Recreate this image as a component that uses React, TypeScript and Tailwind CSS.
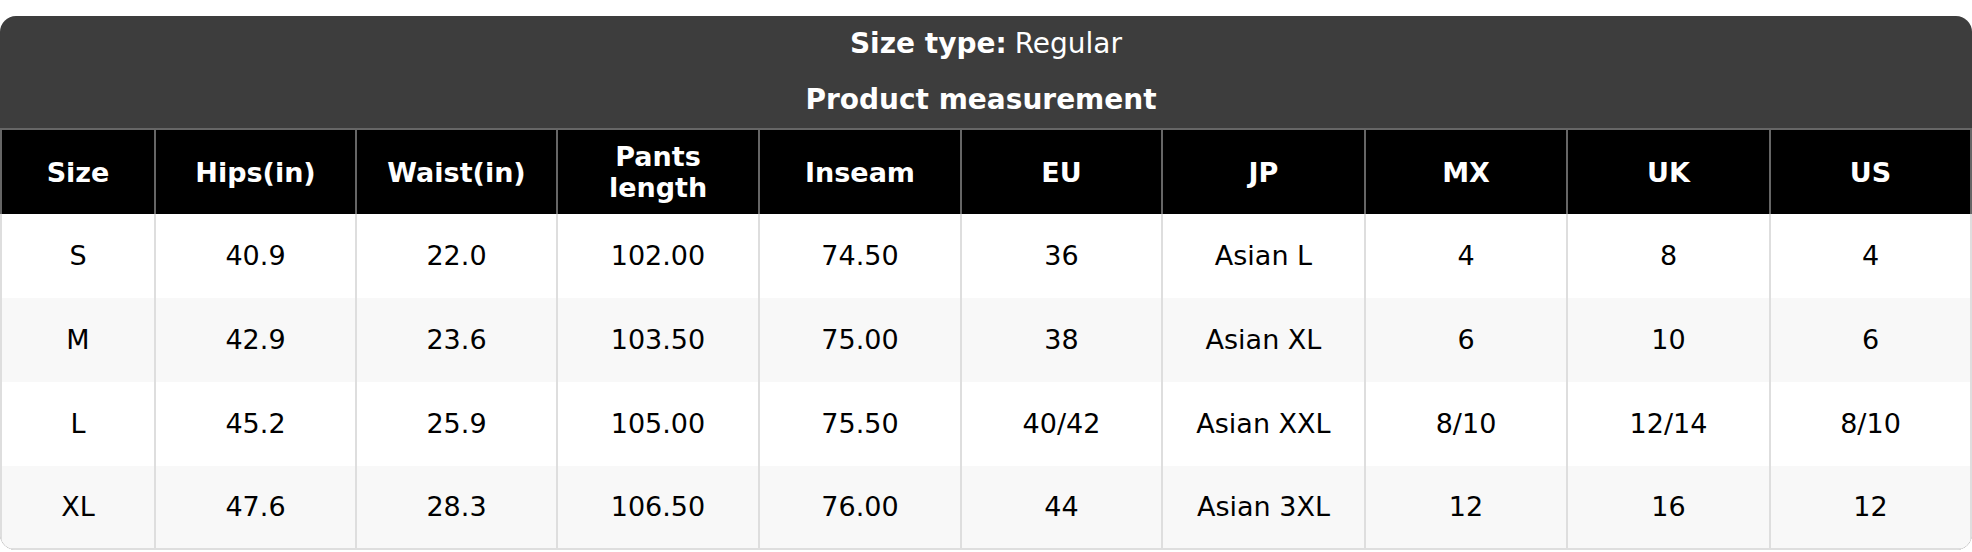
import React from 'react';

const headers = ['Size', 'Hips(in)', 'Waist(in)', 'Pants length', 'Inseam', 'EU', 'JP', 'MX', 'UK', 'US'];

const rows = [
  ['S', '40.9', '22.0', '102.00', '74.50', '36', 'Asian L', '4', '8', '4'],
  ['M', '42.9', '23.6', '103.50', '75.00', '38', 'Asian XL', '6', '10', '6'],
  ['L', '45.2', '25.9', '105.00', '75.50', '40/42', 'Asian XXL', '8/10', '12/14', '8/10'],
  ['XL', '47.6', '28.3', '106.50', '76.00', '44', 'Asian 3XL', '12', '16', '12'],
];

const App = () => {
  return (
    <div className="w-[1972px] h-[552px] bg-white pt-[16px] font-['DejaVu_Sans',sans-serif]">
      <div className="rounded-[16px] overflow-hidden bg-[#3d3d3d]">
        <div className="flex h-[56px] items-center justify-center text-[28px] text-white">
          <span className="font-bold">Size type:</span>
          <span className="ml-[8px]">Regular</span>
        </div>
        <div className="flex h-[56px] items-center justify-center pr-[10px] text-[28px] font-bold text-white">
          Product measurement
        </div>

        <div className="grid grid-cols-[154px_201px_201px_202px_202px_201px_203px_202px_203px_1fr]">
          {headers.map((h, i) => (
            <div
              key={h}
              className={`flex h-[86px] items-center justify-center bg-black border-t-2 border-l-2 border-[#666666] px-2 text-center text-[27px] font-bold leading-[31px] text-white ${i === headers.length - 1 ? 'border-r-2' : ''}`}
            >
              {h === 'Pants length' ? (
                <span>
                  Pants
                  <br />
                  length
                </span>
              ) : (
                h
              )}
            </div>
          ))}

          {rows.map((row, r) =>
            row.map((cell, c) => (
              <div
                key={`${r}-${c}`}
                className={`flex h-[84px] items-center justify-center border-l-2 border-[#dedede] text-[27px] text-black ${r % 2 === 1 ? 'bg-[#f8f8f8]' : 'bg-white'} ${c === row.length - 1 ? 'border-r-2' : ''} ${r === rows.length - 1 ? 'border-b-2' : ''}`}
              >
                {cell}
              </div>
            ))
          )}
        </div>
      </div>
    </div>
  );
};

export default App;
